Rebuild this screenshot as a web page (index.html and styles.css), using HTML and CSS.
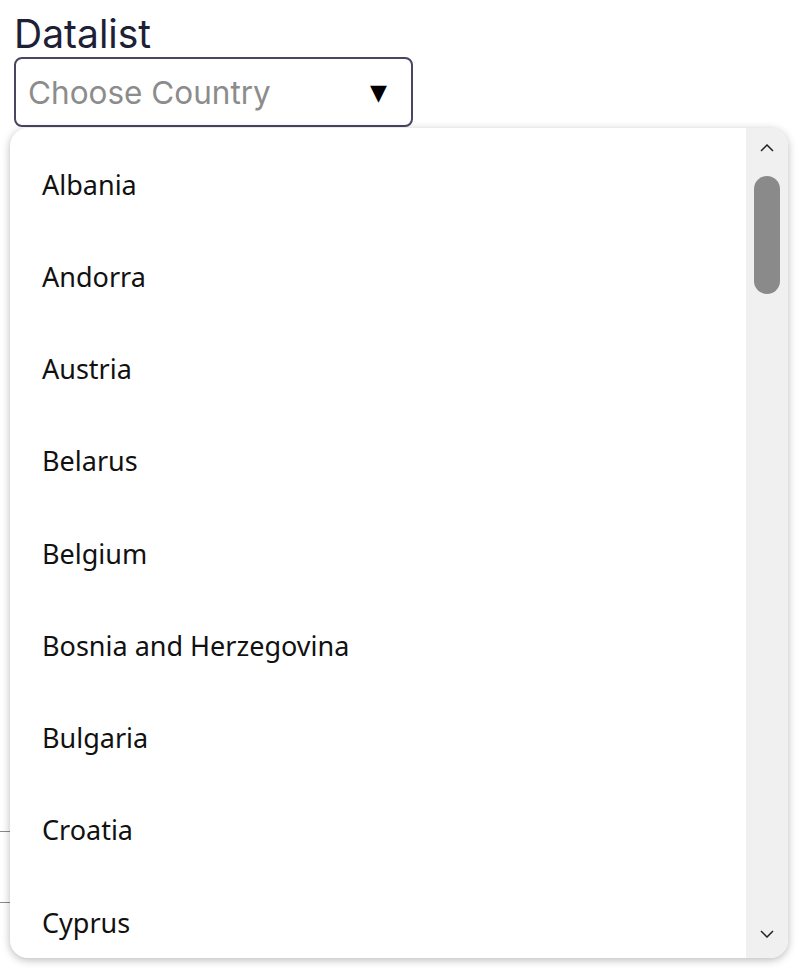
FILE: index.html
```html
<!DOCTYPE html>
<html>
<head>
<meta charset="utf-8">
<link rel="stylesheet" href="styles.css">
</head>
<body>
<div class="page">
  <label class="label">Datalist</label>
  <div class="input">
    <span class="placeholder">Choose Country</span>
    <span class="caret">▼</span>
  </div>
  <div class="behind">
    <div class="line"></div>
    <div class="line"></div>
  </div>
  <div class="dropdown">
    <ul class="list">
      <li>Albania</li>
      <li>Andorra</li>
      <li>Austria</li>
      <li>Belarus</li>
      <li>Belgium</li>
      <li>Bosnia and Herzegovina</li>
      <li>Bulgaria</li>
      <li>Croatia</li>
      <li>Cyprus</li>
    </ul>
    <div class="scrollbar">
      <svg class="arrow" width="14" height="8" viewBox="0 0 14 8"><path d="M1 7 L7 1 L13 7" fill="none" stroke="#222" stroke-width="1.5"/></svg>
      <div class="thumb"></div>
      <div class="spacer"></div>
      <svg class="arrow" width="14" height="8" viewBox="0 0 14 8"><path d="M1 1 L7 7 L13 1" fill="none" stroke="#222" stroke-width="1.5"/></svg>
    </div>
  </div>
</div>
</body>
</html>
```
FILE: styles.css
```css
html, body {
  margin: 0;
  padding: 0;
  background: #ffffff;
}
.page {
  position: relative;
  width: 800px;
  height: 975px;
  overflow: hidden;
  padding: 11px 0 0 14px;
  box-sizing: border-box;
}
.label {
  display: block;
  font-family: "Inter", "Liberation Sans", sans-serif;
  font-size: 39px;
  line-height: 45px;
  color: #1e2136;
  margin: 0 0 1px 0;
}
.input {
  width: 399px;
  height: 70px;
  box-sizing: border-box;
  border: 2px solid #4a4560;
  border-radius: 8px;
  display: flex;
  align-items: center;
  justify-content: space-between;
  padding: 0 24px 0 12px;
}
.placeholder {
  font-family: "Inter", "Liberation Sans", sans-serif;
  font-size: 31.5px;
  color: #8c8c8c;
}
.caret {
  font-family: "DejaVu Sans", sans-serif;
  font-size: 22px;
  color: #000;
}
.behind {
  margin-left: -14px;
  padding-top: 704px;
  display: flex;
  flex-direction: column;
  gap: 70px;
}
.line {
  width: 30px;
  height: 1px;
  background: #8a8a8a;
}
.dropdown {
  position: absolute;
  left: 10px;
  top: 128px;
  width: 778px;
  height: 830px;
  background: #ffffff;
  border-radius: 18px;
  box-shadow: 0 2px 8px rgba(0,0,0,0.28);
  overflow: hidden;
  display: flex;
}
.list {
  list-style: none;
  margin: 0;
  padding: 10px 0 0 0;
  flex: 1;
}
.list li {
  height: 92.25px;
  display: flex;
  align-items: center;
  padding-left: 32px;
  font-family: "Noto Sans", "Open Sans", sans-serif;
  font-size: 27px;
  color: #111111;
}
.scrollbar {
  width: 42px;
  background: #f0f0f0;
  display: flex;
  flex-direction: column;
  align-items: center;
  padding: 16px 0 20px 0;
  box-sizing: border-box;
}
.arrow {
  display: block;
  flex: none;
}
.thumb {
  margin-top: 24px;
  width: 26px;
  height: 118px;
  border-radius: 13px;
  background: #8a8a8a;
}
.spacer {
  flex: 1;
}
```
